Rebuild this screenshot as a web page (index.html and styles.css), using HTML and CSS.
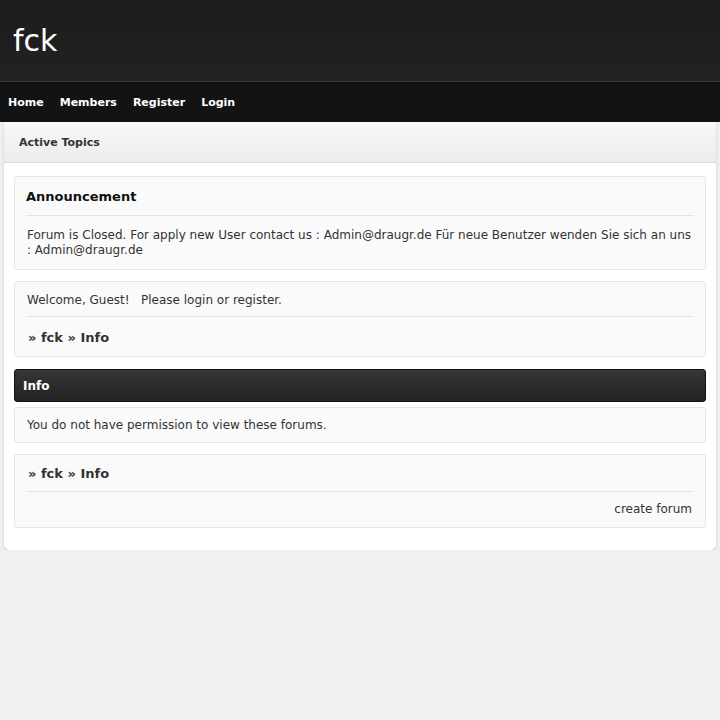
FILE: index.html
```html
<!DOCTYPE html>
<html lang="en">
<head>
  <meta charset="UTF-8">
  <meta name="viewport" content="width=device-width, initial-scale=1.0">
  <title>fck - Info</title>
  <link rel="stylesheet" href="styles.css">
</head>
<body>

  <!-- HEADER
   ================================================== -->
  <div class="header">
    <div class="site-title">fck</div>
  </div>

  <!-- MENU
   ================================================== -->
  <div class="menu">
    <a href="#">Home</a>
    <a href="#">Members</a>
    <a href="#">Register</a>
    <a href="#">Login</a>
  </div>

  <!-- CONTENIDO
   ================================================== -->
  <div class="wrapper">
    <div class="sub-menu">Active Topics</div>

    <div class="content">

      <div class="box">
        <div class="box-title">Announcement</div>
        <div class="box-text">Forum is Closed. For apply new User contact us : Admin@draugr.de Für neue Benutzer wenden Sie sich an uns : Admin@draugr.de</div>
      </div>

      <div class="box">
        <div class="box-row">Welcome, Guest! &nbsp; Please <a href="#">login</a> or <a href="#">register</a>.</div>
        <div class="crumbs">» <a href="#">fck</a> » <a href="#">Info</a></div>
      </div>

      <div class="cat-bar">Info</div>
      <div class="box">
        <div class="box-single">You do not have permission to view these forums.</div>
      </div>

      <div class="box">
        <div class="crumbs crumbs-top">» <a href="#">fck</a> » <a href="#">Info</a></div>
        <div class="box-links"><a href="#">create forum</a></div>
      </div>

    </div>
  </div>
</body>
</html>
```

FILE: styles.css
```css
* { font-family: 'DejaVu Sans', sans-serif; }

body {
  background: #f0f0f0;
  color: #333;
  margin: 0;
}
a {
  color: #333;
  text-decoration: none;
}

.header {
  background: linear-gradient(#1c1c1c, #222);
  border-bottom: 1px solid #3a3a3a;
  height: 81px;
}
  .site-title {
    color: #fff;
    font-size: 30px;
    line-height: 34px;
    padding: 24px 0 0 13px;
  }

.menu {
  background: #131313;
  border-top: 1px solid #0a0a0a;
  display: flex;
  height: 39px;
  align-items: center;
  padding-left: 0;
}
  .menu a {
    color: #fff;
    font-size: 11px;
    font-weight: bold;
    padding: 0 8px;
  }

.wrapper {
  background: #fff;
  border-radius: 0 0 6px 6px;
  box-shadow: 0 1px 3px rgba(0,0,0,0.15);
  margin: 0 4px;
}
  .sub-menu {
    background: linear-gradient(#f8f8f8, #ececec);
    border-bottom: 1px solid #dcdcdc;
    font-size: 11px;
    font-weight: bold;
    height: 40px;
    line-height: 41px;
    padding-left: 15px;
  }
  .content {
    padding: 13px 10px 22px;
  }

.box {
  background: #fafafa;
  border: 1px solid #e6e6e6;
  border-radius: 3px;
  margin-bottom: 11px;
  padding: 0 11px;
}
.box:last-child { margin-bottom: 0; }
  .box-title {
    border-bottom: 1px solid #e3e3e3;
    color: #111;
    font-size: 13px;
    font-weight: bold;
    line-height: 16px;
    padding: 12px 0 10px;
  }
  .box-text {
    font-size: 12px;
    line-height: 15px;
    padding: 12px 1px 11px;
  }
  .box-row {
    border-bottom: 1px solid #e3e3e3;
    font-size: 12px;
    line-height: 15px;
    padding: 11px 1px 8px;
  }
  .box-single {
    font-size: 12px;
    line-height: 15px;
    padding: 10px 1px 9px;
  }
  .crumbs {
    font-size: 13px;
    font-weight: bold;
    line-height: 16px;
    padding: 13px 2px 10px;
  }
    .crumbs a { font-weight: bold; }
  .crumbs-top {
    border-bottom: 1px solid #e3e3e3;
    padding: 11px 2px 9px;
  }
  .box-links {
    font-size: 12px;
    line-height: 15px;
    padding: 10px 2px 10px;
    text-align: right;
  }

.cat-bar {
  background: linear-gradient(#363636, #222);
  border: 1px solid #111;
  border-radius: 3px;
  color: #fff;
  font-size: 12px;
  font-weight: bold;
  height: 31px;
  line-height: 33px;
  margin: 12px 0 5px;
  padding-left: 8px;
}
```
